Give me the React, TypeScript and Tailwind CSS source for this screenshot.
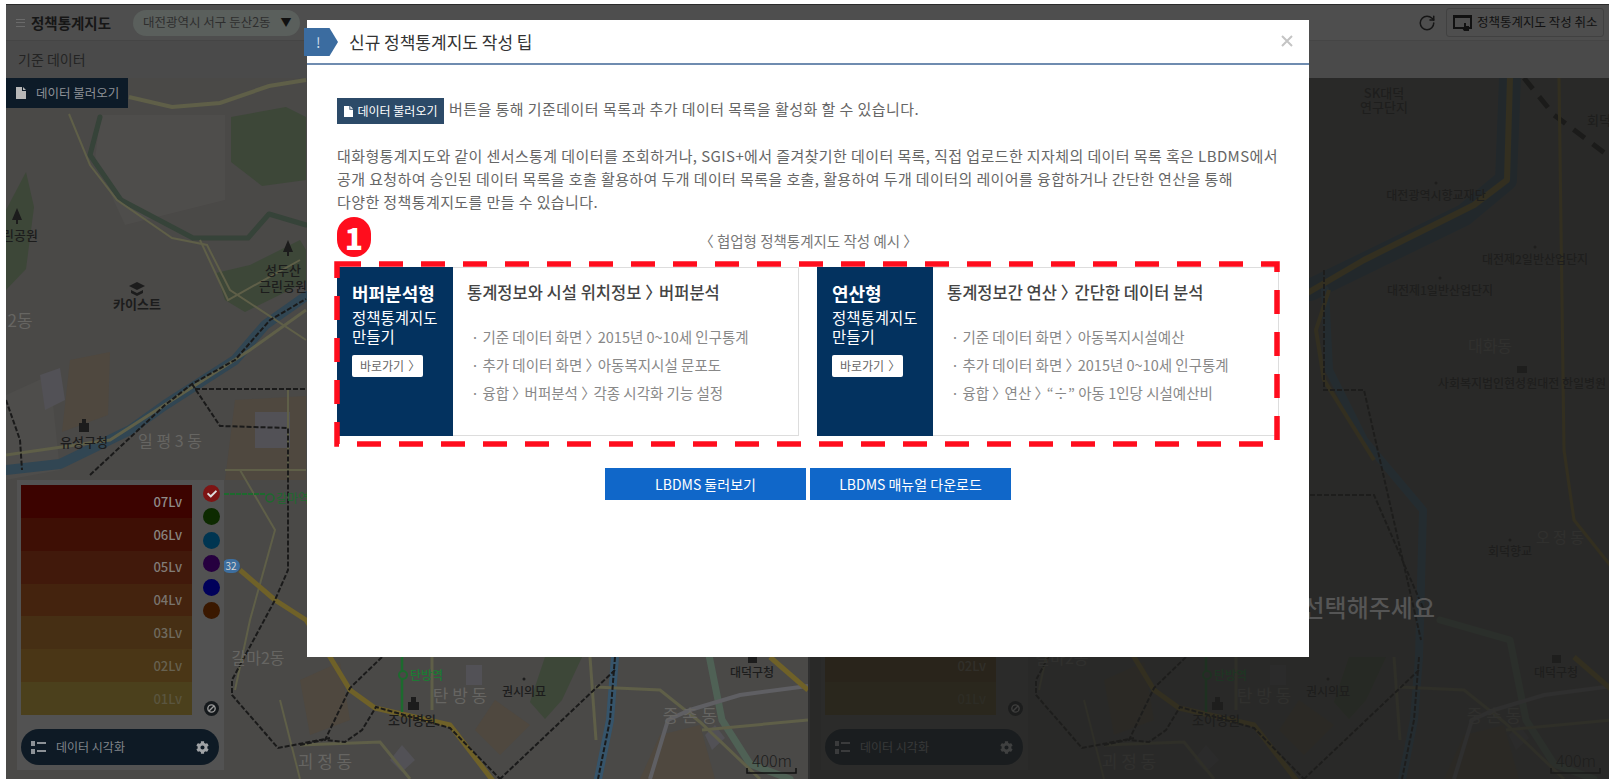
import { RotateCw } from "lucide-react";
import { FaCheck, FaCog } from "react-icons/fa";

const LEVELS = [
  { name: "07Lv", bg: "#3c0300", text: "#8f8b89" },
  { name: "06Lv", bg: "#3e0f05", text: "#89847f" },
  { name: "05Lv", bg: "#41190b", text: "#817c77" },
  { name: "04Lv", bg: "#44230e", text: "#79746d" },
  { name: "03Lv", bg: "#462f14", text: "#6f6a5e" },
  { name: "02Lv", bg: "#4a3616", text: "#676150" },
  { name: "01Lv", bg: "#4b401c", text: "#5a553f" },
];

const PALETTES = ["#7d1414", "#0d2a00", "#003551", "#26003f", "#00005a", "#3a1800"];

// text, x, y, size, color, weight
const MAP_LABELS: [string, number, number, number, string, number?][] = [
  ["근린공원", 14, 235, 13, "#1c1c1c", 500],
  ["성두산", 283, 270, 13, "#1c1c1c", 500],
  ["근린공원", 283, 286, 13, "#1c1c1c", 500],
  ["카이스트", 137, 304, 13, "#1c1c1c", 700],
  ["2동", 20, 321, 17, "#666562"],
  ["유성구청", 84, 442, 13, "#1c1c1c", 500],
  ["일 평 3 동", 170, 441, 16, "#666562"],
  ["갈마2동", 258, 658, 16, "#666562"],
  ["탄 방 동", 460, 696, 17, "#666562"],
  ["권시의묘", 524, 692, 12, "#1c1c1c", 500],
  ["조이병원", 412, 720, 13, "#1c1c1c", 500],
  ["괴 정 동", 325, 762, 17, "#666562"],
  ["중 촌 동", 690, 716, 17, "#666562"],
  ["대덕구청", 752, 673, 12, "#1c1c1c", 500],
  ["SK대덕", 580, 93, 13, "#1c1c1c", 500],
  ["연구단지", 580, 107, 13, "#1c1c1c", 500],
  ["회덕", 795, 120, 13, "#1c1c1c", 500],
  ["대전광역시향교재단", 632, 196, 12, "#1c1c1c", 500],
  ["대전제2일반산업단지", 731, 260, 12, "#1c1c1c", 500],
  ["대전제1일반산업단지", 636, 291, 12, "#1c1c1c", 500],
  ["대화동", 686, 346, 16, "#666562"],
  ["사회복지법인현성원대전 한일병원", 718, 384, 12, "#1c1c1c", 500],
  ["회덕향교", 706, 552, 12, "#1c1c1c", 500],
  ["오 정 동", 756, 538, 15, "#666562"],
];

function MapSvg() {
  return (
    <svg width={804} height={701} viewBox="6 78 804 701" className="block">
      <rect x={6} y={78} width={804} height={701} fill="#4a4947" />

      {/* blocks */}
      <g fill="#4e4d4b">
        <polygon points="100,115 225,115 225,200 125,225 95,160" />
        <polygon points="6,395 50,375 60,470 6,480" />
      </g>
      <g fill="#4f483f">
        <polygon points="70,360 110,352 108,415 62,432" />
        <polygon points="235,400 306,396 306,480 225,480" />
        <polygon points="300,680 340,662 350,720 310,735" />
        <polygon points="495,700 530,725 500,755 475,730" />
        <polygon points="660,735 700,725 715,779 640,779" />
      </g>
      <g fill="#525156">
        <polygon points="255,412 290,412 290,448 255,448" />
        <polygon points="40,375 60,368 65,400 45,410" />
        <polygon points="466,665 482,665 482,685 466,685" />
        <polygon points="402,745 415,760 402,772 390,760" />
        <polygon points="705,735 715,725 725,738 712,750" />
      </g>

      {/* parks */}
      <g fill="#3d4738">
        <polygon points="231,117 286,107 306,117 306,180 262,186 231,162" />
        <polygon points="26,172 34,207 26,269 6,290 6,210" />
        <polygon points="216,273 250,265 300,240 306,250 306,282 245,312 225,300" />
        <polygon points="545,657 582,657 562,700 545,719 530,702" />
      </g>

      {/* rivers */}
      <g fill="none" strokeLinecap="round" strokeLinejoin="round">
        <path d="M6,470 L60,464 L130,430 L165,405 L235,360 L265,325 L306,296" stroke="#314653" strokeWidth={10} />
        <path d="M100,117 L90,155 L121,200 L193,238 L248,238 L269,214 L306,225" stroke="#364339" strokeWidth={5} />
        <path d="M706,78 L702,180 L660,215 L506,290" stroke="#2f4656" strokeWidth={22} />
        <path d="M521,290 L525,370 L560,440 L619,510 L615,657 L610,720 L598,779" stroke="#36546a" strokeWidth={8} />
        <path d="M636,620 L706,640 L722,720 L750,764 L790,779" stroke="#4f6155" strokeWidth={7} />
      </g>

      {/* minor roads */}
      <g fill="none" stroke="#5f5f48" strokeWidth={2}>
        <path d="M129,97 L172,107 L220,103 L269,86 L306,80" strokeWidth={4} />
        <path d="M69,114 L90,165 L117,200 L172,238 L207,245 L230,290 L306,340" />
        <path d="M6,455 L110,440 L250,350 L306,310" strokeWidth={3} />
        <path d="M200,240 L228,300 L300,260" />
        <path d="M225,470 L306,470" />
        <path d="M288,390 L288,480" />
        <path d="M595,687 L660,690 L700,722 L760,779" strokeWidth={3} />
        <path d="M702,730 L808,720" strokeWidth={3} />
        <path d="M300,745 L380,742 L410,779" strokeWidth={3} />
        <path d="M432,657 L432,710" strokeWidth={3} />
        <path d="M240,470 L275,530 L250,620 L235,690" />
        <path d="M280,700 L300,779" />
        <path d="M590,657 L596,740" strokeWidth={3} />
      </g>

      {/* rail */}
      <path d="M650,779 L668,720 L690,710 L740,695 L808,686" fill="none" stroke="#5f5f63" strokeWidth={4} />
      <path d="M720,78 L750,115 L810,160" fill="none" stroke="#111" strokeWidth={5} strokeDasharray="14 10" />

      {/* main roads */}
      <g fill="none" stroke="#6f6128" strokeLinejoin="round">
        <path d="M706,78 L703,180 L670,205 L560,260 L500,295" strokeWidth={6} />
        <path d="M525,290 L512,330 L520,380 L570,460" strokeWidth={4} />
        <path d="M240,570 L275,600 L306,620 L330,657 L350,690 L375,708 L450,725 L500,790" strokeWidth={5} />
        <path d="M770,657 L808,690" strokeWidth={5} />
        <path d="M755,78 L760,450 L770,520 L810,570" strokeWidth={3} />
      </g>

      {/* boundaries */}
      <g fill="none" stroke="#1a1a1a" strokeWidth={2} strokeDasharray="5 2">
        <path d="M90,475 L165,405 L192,384 L235,360 L270,320 L306,299" />
        <path d="M192,384 L220,426 L288,428 L288,570 L275,600 L232,680 L232,695 L278,748 L330,738" />
        <path d="M195,389 L306,389" />
        <path d="M382,657 L350,688 L325,740 L345,742 L362,730 L376,707 L450,728 L500,779" />
        <path d="M615,670 L500,779" />
        <path d="M300,745 L323,740" />
        <path d="M615,657 L610,720 L598,779" />
        <path d="M520,270 L520,390 L560,390 L617,640" />
        <path d="M506,495 L570,495 L620,610" />
        <path d="M6,400 L20,440 L22,470" />
      </g>

      {/* subway */}
      <path d="M224,494 L265,494" stroke="#1d6a2e" strokeWidth={2} strokeDasharray="5 1" fill="none" />
      <circle cx={270} cy={498} r={4} fill="none" stroke="#1d6a2e" strokeWidth={1.5} />
      <text x={276} y={503} fontSize={12} fill="#1d6a2e">갈마역</text>
      <path d="M402,657 L402,712" stroke="#1d6a2e" strokeWidth={2.5} fill="none" />
      <circle cx={403} cy={675} r={4} fill="#4a4947" stroke="#1d6a2e" strokeWidth={2} />
      <text x={410} y={680} fontSize={12} fontWeight={500} fill="#1d7a34">탄방역</text>

      <rect x={222} y={559} width={18} height={14} rx={7} fill="#3d6e9e" />
      <text x={231} y={570} fontSize={10} fill="#d5d5d5" textAnchor="middle">32</text>

      {/* pois */}
      <path d="M12,220 l5,-12 l5,12 z M16,220 h2 v4 h-2 z" fill="#1c1c1c" />
      <path d="M283,252 l5,-12 l5,12 z M287,252 h2 v4 h-2 z" fill="#1c1c1c" />
      <path d="M137,290 l8,-4 l-8,-4 l-8,4 z M131,290 v3 l6,3 l6,-3 v-3 l-6,3 z" fill="#1c1c1c" />
      <rect x={79} y={423} width={10} height={9} fill="#1c1c1c" />
      <rect x={82} y={419} width={4} height={4} fill="#1c1c1c" />
      <rect x={408} y={702} width={11} height={8} fill="#1c1c1c" />
      <rect x={411} y={697} width={5} height={5} fill="#1c1c1c" />
      <rect x={748} y={655} width={9} height={8} fill="#1c1c1c" />
      <circle cx={524} cy={679} r={1.5} fill="#1c1c1c" />
      <circle cx={632} cy={183} r={1.5} fill="#1c1c1c" />
      <circle cx={731} cy={247} r={1.5} fill="#1c1c1c" />
      <circle cx={636} cy={278} r={1.5} fill="#1c1c1c" />
      <circle cx={706} cy={540} r={1.5} fill="#1c1c1c" />
      <rect x={713} y={366} width={10} height={7} fill="#1c1c1c" />

      {MAP_LABELS.map(([t, x, y, size, color, weight], i) => (
        <text key={i} x={x} y={y + size * 0.36} fontSize={size} fontWeight={weight ?? 400} fill={color} textAnchor="middle">
          {t}
        </text>
      ))}

      {/* scale */}
      <text x={772} y={767} fontSize={16} fontWeight={300} fill="#1c1c1c" textAnchor="middle">400m</text>
      <path d="M747,768 L747,773 L796,773 L796,768" fill="none" stroke="#111" strokeWidth={1.5} />
    </svg>
  );
}

function FileIcon({ className }: { className?: string }) {
  return (
    <svg viewBox="0 0 10 12" className={className} fill="currentColor">
      <path d="M0 0 H6 V4 H10 V12 H0 Z M7 0 L10 3 H7 Z" />
    </svg>
  );
}

// the CJK bracket sits in the left half of its em box, so close up the empty half
function Chevrons({ text }: { text: string }) {
  const parts = text.split("〉");
  return (
    <>
      {parts.map((p, i) => (
        <span key={i}>
          {p}
          {i < parts.length - 1 && <span className="inline-block w-[0.62em] overflow-visible whitespace-nowrap">〉</span>}
        </span>
      ))}
    </>
  );
}

function Legend() {
  return (
    <div className="absolute left-[11px] bottom-[9px] w-[207px] h-[290px] bg-[#525252] pl-[4px] pt-[5px]">
      <div className="flex gap-[11px] h-[230px]">
        <div className="w-[171px] flex flex-col">
          {LEVELS.map((l) => (
            <div
              key={l.name}
              className="flex-1 flex items-center justify-end pr-[10px] text-[13px] font-medium"
              style={{ backgroundColor: l.bg, color: l.text }}
            >
              {l.name}
            </div>
          ))}
        </div>
        <div className="w-[17px] flex flex-col items-center gap-[6.4px]">
          {PALETTES.map((c, i) => (
            <div
              key={c}
              className="w-[17px] h-[17px] rounded-full flex items-center justify-center text-[#ddd] text-[10px]"
              style={{ backgroundColor: c }}
            >
              {i === 0 && <FaCheck />}
            </div>
          ))}
          <div className="mt-auto w-[15px] h-[15px] mb-[-1px] rounded-full bg-[#15191c] flex items-center justify-center">
            <svg viewBox="0 0 12 12" className="w-[11px] h-[11px]" fill="none" stroke="#9a9a9a" strokeWidth={1.5}>
              <circle cx={6} cy={6} r={4} />
              <path d="M3 9 L9 3" />
            </svg>
          </div>
        </div>
      </div>
      <div className="mt-[14px] w-[198px] h-[36px] rounded-full bg-[#0e1a25] flex items-center pl-[10px] pr-[10px]">
        <svg viewBox="0 0 16 13" className="w-[16px] h-[13px]" fill="#8c9196">
          <rect x={0} y={0} width={4} height={5} />
          <rect x={0} y={8} width={4} height={5} />
          <rect x={6} y={1} width={9} height={2} />
          <rect x={6} y={9} width={9} height={2} />
        </svg>
        <span className="ml-[9px] text-[12px] text-[#80858a]">데이터 시각화</span>
        <FaCog className="ml-auto text-[13px] text-[#a0a3a6]" />
      </div>
    </div>
  );
}

function MapPanel({ dim }: { dim?: boolean }) {
  return (
    <div className={dim ? "relative w-[799px] h-full overflow-hidden" : "relative w-[804px] h-full overflow-hidden border-r-2 border-[#2f2f2f]"}>
      <MapSvg />
      {!dim && (
        <div className="absolute left-0 top-0 w-[122px] h-[30px] bg-[#0d1b28] flex items-center pl-[10px] text-[12.5px] text-[#8d9197]">
          <FileIcon className="w-[10px] h-[12px] text-[#b8b8b8]" />
          <span className="ml-[10px]">데이터 불러오기</span>
        </div>
      )}
      <Legend />
      {dim && (
        <>
          <div className="absolute inset-0 bg-[#1f1f1d]/75" />
          <div className="absolute right-[174px] top-[511px] text-[24px] font-medium text-[#555] whitespace-nowrap">
            지도를 선택해주세요
          </div>
        </>
      )}
    </div>
  );
}

function Card({ title, heading, items }: { title: string; heading: string; items: string[] }) {
  return (
    <div className="w-[462px] h-[169px] flex border border-[#dddddd] bg-white">
      <div className="w-[116px] -ml-px -my-px bg-[#03325f] pl-[15px] pt-[14px] text-white shrink-0">
        <div className="text-[18px] font-bold leading-[24px]">{title}</div>
        <div className="text-[15.5px] leading-[19px] mt-[3px]">
          정책통계지도
          <br />
          만들기
        </div>
        <div className="mt-[9px] w-[71px] h-[22px] rounded-[2px] bg-white text-[#666] text-[12px] flex items-center pl-[8px] whitespace-nowrap">
          바로가기
          <span className="ml-[4px]">〉</span>
        </div>
      </div>
      <div className="pl-[14px] pt-[12px]">
        <div className="text-[16.5px] font-medium leading-[24px] text-[#444] whitespace-nowrap">
          <Chevrons text={heading} />
        </div>
        <div className="mt-[19px] pl-[4px] text-[14.5px] leading-[28px] text-[#888] whitespace-nowrap">
          {items.map((t) => (
            <div key={t}>
              · <Chevrons text={t} />
            </div>
          ))}
        </div>
      </div>
    </div>
  );
}

function Modal() {
  return (
    <div className="absolute left-[307px] top-[20px] w-[1002px] h-[637px] bg-white">
      <div className="h-[45px] border-b-2 border-[#6f8cb0] flex items-center pl-[42px] text-[17px] text-[#333]">
        신규 정책통계지도 작성 팁
      </div>
      <div className="absolute -left-[3px] top-[8px] w-[34px] h-[28px] bg-[#3b6ca0] text-[#cfdcea] text-[14px] flex items-center pl-[12px] [clip-path:polygon(0_0,75%_0,100%_50%,75%_100%,0_100%)]">
        !
      </div>
      <div className="absolute right-[16px] top-[15px] text-[#c4c4c4]">
        <svg viewBox="0 0 12 12" className="w-[12px] h-[12px]" stroke="currentColor" strokeWidth={2}>
          <path d="M1 1 L11 11 M11 1 L1 11" />
        </svg>
      </div>

      <div className="pl-[30px] pr-[29px]">
        <div className="mt-[33px] flex items-center h-[26px] text-[15px] tracking-[0.45px] text-[#666] whitespace-nowrap">
          <div className="w-[107px] h-[26px] bg-[#2c4a68] text-white text-[12px] tracking-normal flex items-center justify-center mr-[5px]">
            <FileIcon className="w-[9px] h-[11px] mr-[5px]" />
            데이터 불러오기
          </div>
          <span className="pb-[4px]">버튼을 통해 기준데이터 목록과 추가 데이터 목록을 활성화 할 수 있습니다.</span>
        </div>
        <div className="mt-[20px] text-[15px] tracking-[0.4px] leading-[23px] text-[#666] whitespace-nowrap">
          대화형통계지도와 같이 센서스통계 데이터를 조회하거나, SGIS+에서 즐겨찾기한 데이터 목록, 직접 업로드한 지자체의 데이터 목록 혹은 LBDMS에서
          <br />
          공개 요청하여 승인된 데이터 목록을 호출 활용하여 두개 데이터 목록을 호출, 활용하여 두개 데이터의 레이어를 융합하거나 간단한 연산을 통해
          <br />
          다양한 정책통계지도를 만들 수 있습니다.
        </div>
        <div className="mt-[16px] h-[24px] leading-[24px] text-center text-[14.5px] text-[#777]">
          〈 협업형 정책통계지도 작성 예시 〉
        </div>
        <div className="mt-[14px] flex gap-[18px]">
          <Card
            title="버퍼분석형"
            heading="통계정보와 시설 위치정보 〉 버퍼분석"
            items={["기준 데이터 화면 〉 2015년 0~10세 인구통계", "추가 데이터 화면 〉 아동복지시설 문포도", "융합 〉 버퍼분석 〉 각종 시각화 기능 설정"]}
          />
          <Card
            title="연산형"
            heading="통계정보간 연산 〉 간단한 데이터 분석"
            items={["기준 데이터 화면 〉 아동복지시설예산", "추가 데이터 화면 〉 2015년 0~10세 인구통계", "융합 〉 연산 〉 “÷” 아동 1인당 시설예산비"]}
          />
        </div>
        <div className="mt-[32px] flex justify-center gap-[4px] pr-[1px]">
          <div className="w-[201px] h-[32px] bg-[#1067c9] text-white text-[14px] flex items-center justify-center">LBDMS 둘러보기</div>
          <div className="w-[201px] h-[32px] bg-[#1067c9] text-white text-[14px] flex items-center justify-center">LBDMS 매뉴얼 다운로드</div>
        </div>
      </div>

      {/* annotation drawn over the cards */}
      <svg className="absolute left-[-307px] top-[-20px] pointer-events-none" width={1618} height={784}>
        <rect x={337} y={264} width={940} height={180} fill="none" stroke="#ff0d1d" strokeWidth={5.5} strokeDasharray="24 18" />
      </svg>
      <div className="absolute left-[30px] top-[197px] w-[34px] h-[40px] rounded-full bg-[#ff0d1d] text-white text-[30px] font-black flex items-center justify-center">
        1
      </div>
    </div>
  );
}

export default function App() {
  return (
    <div className="relative w-[1618px] h-[784px] overflow-hidden bg-white font-['Noto_Sans_CJK_KR','Noto_Sans',sans-serif]">
      <div className="absolute left-[6px] top-[4px] w-[1603px] h-[775px] flex flex-col">
        <div className="h-[37px] shrink-0 bg-[#4e4e4e] border-t border-[#2b2b2b] border-b border-b-[#454545] flex items-center pl-[10px] pr-[5px]">
          <div className="w-[9px] h-[8px] border-y border-[#6a6a6a] relative">
            <div className="absolute left-0 right-0 top-[2px] h-px bg-[#6a6a6a]" />
          </div>
          <span className="ml-[6px] text-[14.5px] font-bold text-[#161616]">정책통계지도</span>
          <div className="ml-[22px] w-[167px] h-[26px] rounded-full bg-[#5a5f5c] flex items-center pl-[10px] text-[12.5px] text-[#2e2e2e] whitespace-nowrap">
            대전광역시 서구 둔산2동
            <span className="ml-[10px] text-[11px] text-[#111]">▼</span>
          </div>
          <RotateCw className="ml-auto w-[18px] h-[18px] text-[#161616]" strokeWidth={2} />
          <div className="ml-[10px] w-[158px] h-[29px] rounded-[3px] border border-[#414141] flex items-center pl-[6px] text-[12.5px] text-[#111] whitespace-nowrap">
            <svg viewBox="0 0 20 18" className="w-[20px] h-[18px] mr-[4px] shrink-0" fill="none">
              <rect x={1} y={2} width={17} height={12} stroke="#111" strokeWidth={2} />
              <rect x={1} y={1} width={17} height={3} fill="#111" />
              <path d="M11 9 h2 v3 h3 v5 h-5 l-2 -3 h2 z" fill="#111" />
            </svg>
            정책통계지도 작성 취소
          </div>
        </div>
        <div className="h-[37px] shrink-0 bg-[#4a4a4a] flex items-center pl-[12px] text-[14px] text-[#242424]">기준 데이터</div>
        <div className="flex-1 flex min-h-0">
          <MapPanel />
          <MapPanel dim />
        </div>
      </div>
      <Modal />
    </div>
  );
}
